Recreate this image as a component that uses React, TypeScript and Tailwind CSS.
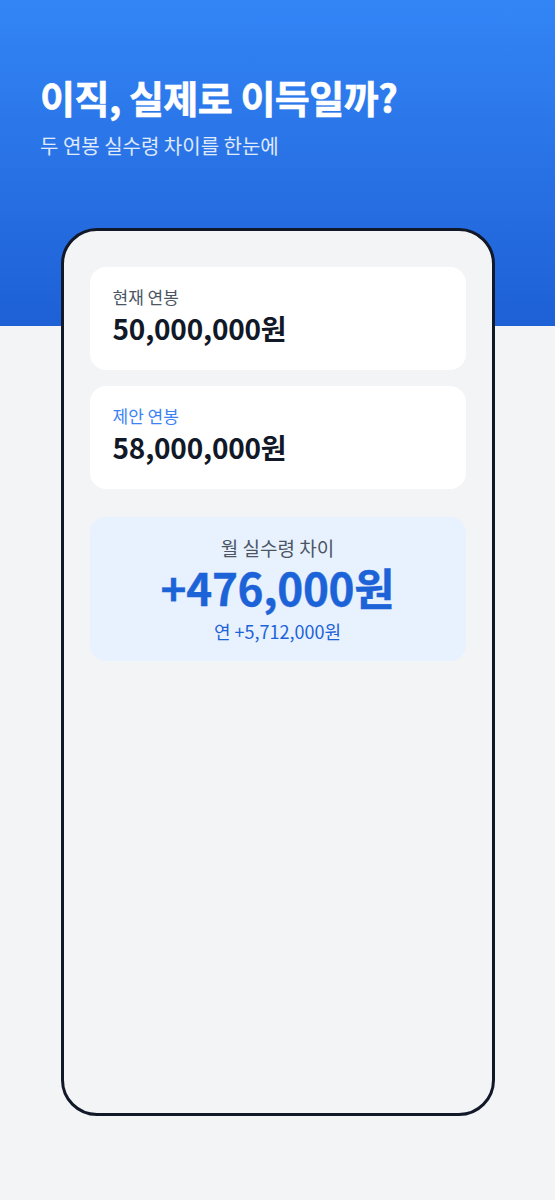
import { memo } from "react";

const FONT = "font-['Noto_Sans_CJK_KR','Noto_Sans',sans-serif]";

interface SalaryCardProps {
  label: string;
  amount: string;
  accent?: boolean;
}

const SalaryCard = memo((props: SalaryCardProps) => {
  const { label, amount, accent } = props;

  return (
    <div className="flex h-[103px] flex-col rounded-2xl bg-white px-[23px] pt-[19px]">
      <p
        className={
          accent
            ? "text-[17px] leading-[22px] text-[#3b82f6]"
            : "text-[17px] leading-[22px] text-[#4b5563]"
        }
      >
        {label}
      </p>
      <p className="mt-[2px] text-[28px] font-bold leading-[36px] tracking-[-0.2px] text-[#111827]">
        {amount}
      </p>
    </div>
  );
});

const DiffCard = memo(() => {
  return (
    <div className="mt-[28px] flex h-[144px] flex-col items-center rounded-2xl bg-[#e8f1fe] pt-[18px]">
      <p className="text-[19px] leading-[26px] text-[#4b5563]">월 실수령 차이</p>
      <p className="text-[44px] font-bold leading-[52px] tracking-[-0.3px] text-[#1d63d8] [-webkit-text-stroke:0.4px_#1d63d8]">
        +476,000원
      </p>
      <p className="mt-[6px] text-[18px] leading-[24px] text-[#1d63d8]">
        연 +5,712,000원
      </p>
    </div>
  );
});

export default function App() {
  return (
    <div
      className={`${FONT} flex h-[1200px] w-full flex-col bg-[linear-gradient(to_bottom,#3385f6_0px,#1e60d6_326px,#f3f4f6_326px,#f3f4f6_100%)]`}
    >
      <header className="px-10 pt-[72px]">
        <h1 className="text-[38px] font-bold leading-[50px] tracking-[-0.5px] text-white [-webkit-text-stroke:0.6px_#fff]">
          이직, 실제로 이득일까?
        </h1>
        <p className="mt-[10px] text-[20px] leading-[28px] text-white/85">
          두 연봉 실수령 차이를 한눈에
        </p>
      </header>

      <div className="mx-auto mt-[68px] h-[888px] w-[434px] rounded-[36px] border-[3px] border-[#111827] bg-[#f3f4f6] px-[26px] pt-[36px]">
        <div className="flex flex-col gap-[16px]">
          <SalaryCard label="현재 연봉" amount="50,000,000원" />
          <SalaryCard label="제안 연봉" amount="58,000,000원" accent />
        </div>
        <DiffCard />
      </div>
    </div>
  );
}
